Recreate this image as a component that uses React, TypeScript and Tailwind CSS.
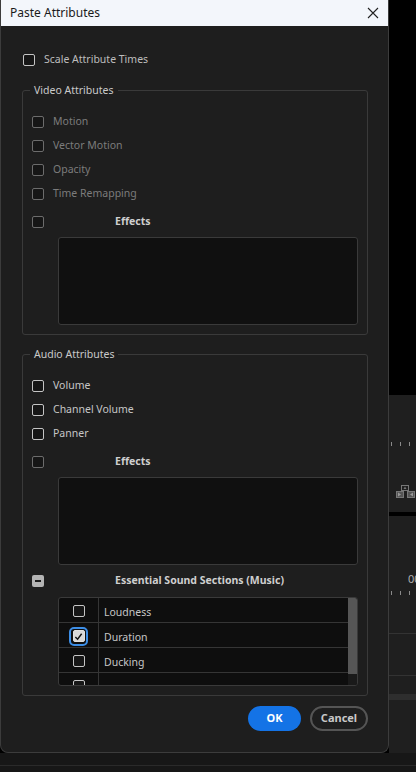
import React from "react";

type BoxKind = "off" | "dim" | "mixed" | "on";

// small square checkbox, drawn the way the dark dialog shows it
function Box({ kind }: { kind: BoxKind }) {
    if (kind === "mixed") {
        return (
            <span className="flex h-[12px] w-[12px] shrink-0 items-center justify-center rounded-[2px] bg-[#b4b4b4]">
                <span className="h-[2px] w-[6px] bg-[#1c1c1c]" />
            </span>
        );
    }
    if (kind === "on") {
        return (
            <span className="flex h-[19px] w-[19px] shrink-0 items-center justify-center rounded-[5px] border-2 border-[#3d8ee6]">
                <span className="flex h-[12px] w-[12px] items-center justify-center rounded-[2px] border border-[#e0e0e0] bg-[#d8d8d8]">
                    <svg width="9" height="9" viewBox="0 0 10 10">
                        <polyline
                            points="1.5 5.5 4 8 8.5 2"
                            fill="none"
                            stroke="#111"
                            strokeWidth="1.6"
                        />
                    </svg>
                </span>
            </span>
        );
    }
    return (
        <span
            className={`h-[12px] w-[12px] shrink-0 rounded-[2px] border-[1.5px] bg-[#161616] ${
                kind === "dim" ? "border-[#6c6c6c]" : "border-[#c4c4c4]"
            }`}
        />
    );
}

function Row({ label, kind }: { label: string; kind: BoxKind }) {
    return (
        <div className="flex h-[24px] items-center gap-[9px]">
            <Box kind={kind} />
            <span
                className={kind === "dim" ? "text-[#7c7c7c]" : "text-[#c6c6c6]"}
            >
                {label}
            </span>
        </div>
    );
}

function Group({ title, children }: { title: string; children: React.ReactNode }) {
    return (
        <fieldset className="rounded-[3px] border border-[#3a3a3a] px-[9px] pb-[9px] pt-[11px]">
            <legend className="-ml-[2px] px-[4px] text-[#cacaca]">{title}</legend>
            {children}
        </fieldset>
    );
}

function EffectsHead({ label, kind }: { label: string; kind: BoxKind }) {
    return (
        <div className="flex h-[16px] items-center">
            <Box kind={kind} />
            <span className="ml-[71px] font-bold text-[#cfcfcf]">{label}</span>
        </div>
    );
}

const sections = [
    { name: "Loudness", checked: false },
    { name: "Duration", checked: true },
    { name: "Ducking", checked: false },
    { name: "", checked: false },
];

export default function App() {
    return (
        <div
            className="flex h-[772px] w-[416px] flex-col overflow-hidden bg-black text-[10.5px]"
            style={{ fontFamily: '"Noto Sans", "Open Sans", sans-serif' }}
        >
            <div className="flex h-[753px]">
                {/* dialog */}
                <div className="flex w-[389px] shrink-0 flex-col overflow-hidden rounded-b-[8px] border-x border-b border-[#3c3c3c] bg-[#1e1e1e]">
                    <div className="flex h-[26px] items-center justify-between bg-[#f3f6fb] pl-[9px] pr-[9px] text-[12px] text-[#1a1a1a]">
                        <span>Paste Attributes</span>
                        <svg width="12" height="12" viewBox="0 0 12 12">
                            <path d="M1 1L11 11M11 1L1 11" stroke="#222" strokeWidth="1.1" />
                        </svg>
                    </div>

                    <div className="flex flex-col pl-[21px] pr-[20px] pt-[23px]">
                        <div className="ml-[1px] flex h-[22px] items-center gap-[9px]">
                            <Box kind="off" />
                            <span className="text-[#bdbdbd]">Scale Attribute Times</span>
                        </div>

                        <div className="mt-[12px]">
                            <Group title="Video Attributes">
                                <Row label="Motion" kind="dim" />
                                <Row label="Vector Motion" kind="dim" />
                                <Row label="Opacity" kind="dim" />
                                <Row label="Time Remapping" kind="dim" />
                                <div className="mt-[8px]">
                                    <EffectsHead label="Effects" kind="dim" />
                                </div>
                                <div className="ml-[26px] mt-[7px] h-[88px] w-[300px] rounded-[3px] border border-[#3a3a3a] bg-[#101010]" />
                            </Group>
                        </div>

                        <div className="mt-[12px]">
                            <Group title="Audio Attributes">
                                <Row label="Volume" kind="off" />
                                <Row label="Channel Volume" kind="off" />
                                <Row label="Panner" kind="off" />
                                <div className="mt-[8px]">
                                    <EffectsHead label="Effects" kind="dim" />
                                </div>
                                <div className="ml-[26px] mt-[7px] h-[88px] w-[300px] rounded-[3px] border border-[#3a3a3a] bg-[#101010]" />
                                <div className="mt-[8px]">
                                    <EffectsHead
                                        label="Essential Sound Sections (Music)"
                                        kind="mixed"
                                    />
                                </div>
                                <div className="ml-[26px] mt-[8px] flex h-[89px] w-[300px] overflow-hidden rounded-[3px] border border-[#3a3a3a] bg-[#0e0e0e]">
                                    <div className="flex flex-1 flex-col">
                                        {sections.map((s, i) => (
                                            <div
                                                key={i}
                                                className="flex h-[25px] shrink-0 border-b border-[#353535]"
                                            >
                                                <div className="flex w-[40px] shrink-0 items-center justify-center border-r border-[#353535] pt-[3px]">
                                                    <Box kind={s.checked ? "on" : "off"} />
                                                </div>
                                                <span className="flex items-center pl-[5px] pt-[7px] text-[#c6c6c6]">
                                                    {s.name}
                                                </span>
                                            </div>
                                        ))}
                                    </div>
                                    <div className="w-[9px] shrink-0 bg-[#1a1a1a]">
                                        <div className="h-[76px] bg-[#565656]" />
                                    </div>
                                </div>
                            </Group>
                        </div>

                        <div className="mt-[10px] flex justify-end gap-[9px] text-[11px] font-bold">
                            <button className="h-[25px] w-[53px] rounded-full bg-[#1473e6] text-white">
                                OK
                            </button>
                            <button className="h-[25px] w-[58px] rounded-full border-2 border-[#555] text-[#c8c8c8]">
                                Cancel
                            </button>
                        </div>
                    </div>
                </div>

                {/* app behind the dialog */}
                <div className="flex flex-1 flex-col">
                    <div className="h-[395px] bg-black" />
                    <div className="flex h-[117px] flex-col bg-[#1f1f1f] pl-[2px]">
                        <div className="mt-[47px] flex gap-[8px]">
                            <span className="h-[4px] w-px bg-[#8a8a8a]" />
                            <span className="h-[4px] w-px bg-[#8a8a8a]" />
                            <span className="h-[4px] w-px bg-[#8a8a8a]" />
                        </div>
                        <svg className="ml-[5px] mt-[39px]" width="19" height="13" viewBox="0 0 19 13">
                            <rect x="5.5" y="0.5" width="7" height="5" fill="none" stroke="#777" />
                            <path d="M9 1.5L10.5 4H7.5Z" fill="#777" />
                            <rect x="0.5" y="6.5" width="7" height="6" fill="#555" stroke="#777" />
                            <rect x="11.5" y="6.5" width="7" height="6" fill="#555" stroke="#777" />
                            <path d="M2 7.5L5 9.5L2 11.5Z M17 7.5L14 9.5L17 11.5Z" fill="#999" />
                        </svg>
                    </div>
                    <div className="h-[4px] bg-black" />
                    <div className="flex flex-1 flex-col bg-[#1f1f1f]">
                        <span className="ml-[19px] mt-[55px] h-[16px] text-[11px] text-[#b0b0b0]">00</span>
                        <div className="mt-[4px] flex gap-[8px] pl-[2px]">
                            <span className="h-[4px] w-px bg-[#8a8a8a]" />
                            <span className="h-[4px] w-px bg-[#8a8a8a]" />
                            <span className="h-[4px] w-px bg-[#8a8a8a]" />
                            <span className="h-[4px] w-px bg-[#8a8a8a]" />
                        </div>
                        <div className="mt-[38px] h-px bg-[#333]" />
                        <div className="mt-[41px] h-px bg-[#333]" />
                        <div className="mt-[18px] h-[6px] bg-[#2e2e2e]" />
                    </div>
                </div>
            </div>
            <div className="flex flex-1 flex-col bg-[#171717]">
                <div className="mt-[12px] h-px bg-[#2a2a2a]" />
            </div>
        </div>
    );
}
